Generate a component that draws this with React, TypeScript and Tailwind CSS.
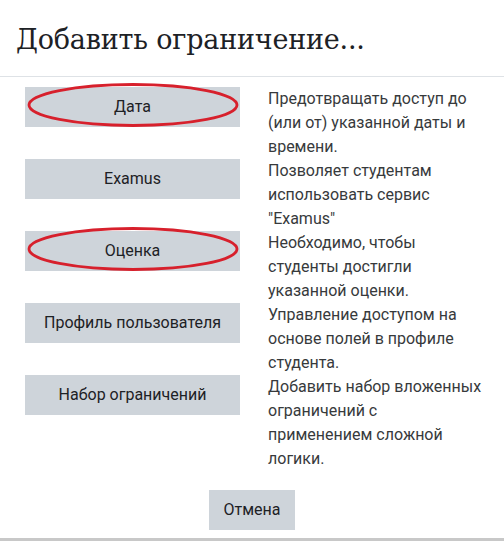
import React from 'react';

interface Option {
  label: string;
  desc: string;
  circled?: boolean;
}

const options: Option[] = [
  { label: 'Дата', desc: 'Предотвращать доступ до (или от) указанной даты и времени.', circled: true },
  { label: 'Examus', desc: 'Позволяет студентам использовать сервис "Examus"' },
  { label: 'Оценка', desc: 'Необходимо, чтобы студенты достигли указанной оценки.', circled: true },
  { label: 'Профиль пользователя', desc: 'Управление доступом на основе полей в профиле студента.' },
  { label: 'Набор ограничений', desc: 'Добавить набор вложенных ограничений с применением сложной логики.' },
];

const Ellipse: React.FC = () => (
  <svg
    className="absolute left-[2px] top-[-5px] pointer-events-none"
    width="212"
    height="46"
    viewBox="0 0 212 46"
  >
    <ellipse cx="106" cy="23" rx="104" ry="20.5" fill="none" stroke="#d7202c" strokeWidth="2.8" />
  </svg>
);

export default function App() {
  return (
    <div className="w-[504px] h-[541px] bg-white overflow-hidden flex flex-col font-['Roboto',sans-serif] border-b-[3px] border-[#c8c8c8]">
      <header className="h-[77px] border-b border-[#dee2e6] flex items-center px-4 pt-[2px]">
        <h1 className="font-['DejaVu_Serif',serif] text-[27px] leading-none text-[#1d2125] tracking-[-0.2px]">
          Добавить ограничение...
        </h1>
      </header>
      <main className="pl-[25px] pt-[10px] flex flex-col">
        {options.map((o) => (
          <div key={o.label} className="flex gap-[28px]">
            <div className="relative w-[215px] shrink-0">
              <button className="w-full h-[40px] bg-[#ced4da] text-[16px] text-[#1d2125]">
                {o.label}
              </button>
              {o.circled && <Ellipse />}
            </div>
            <p className="w-[216px] text-[16px] leading-[24px] text-[#373a3c]">{o.desc}</p>
          </div>
        ))}
      </main>
      <div className="flex justify-center pt-[19px]">
        <button className="w-[86px] h-[40px] bg-[#ced4da] text-[16px] text-[#1d2125]">Отмена</button>
      </div>
    </div>
  );
}
